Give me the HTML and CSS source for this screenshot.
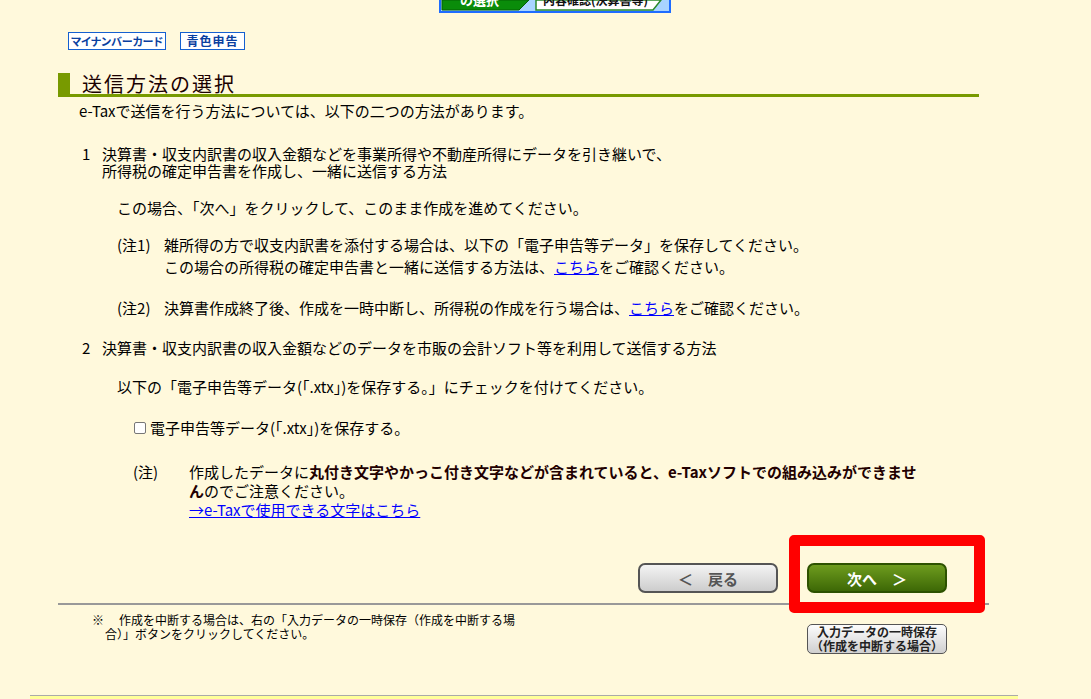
FILE: index.html
```
<!DOCTYPE html>
<html lang="ja">
<head>
    <meta charset="UTF-8">
    <meta name="viewport" content="width=device-width, initial-scale=1.0">
    <title>送信方法の選択</title>
    <link rel="stylesheet" href="styles.css">
</head>
<body>
    <!-- 進行状況 (上部の画像の下端だけが見えている) -->
    <div class="steps">
        <svg width="232" height="13" viewBox="0 0 232 13">
            <rect x="1" y="-2" width="230" height="14" fill="#a8d4ff" stroke="#1e6cff" stroke-width="2"/>
            <polygon points="3,0 90,0 80,10 3,10" fill="#0a8c0a" stroke="#056005" stroke-width="1"/>
            <text x="21" y="5" class="step-on">の選択</text>
            <polygon points="97,0 222,0 214,10 97,10" fill="#fff" stroke="#2a8a2a" stroke-width="1.5"/>
            <text x="104" y="5" class="step-off">内容確認(決算書等)</text>
        </svg>
    </div>

    <div class="tags">
        <span class="tag tag-card">マイナンバーカード</span>
        <span class="tag tag-blue">青色申告</span>
    </div>

    <div class="content">
        <h2 class="title">送信方法の選択</h2>
        <p class="lead">e-Taxで送信を行う方法については、以下の二つの方法があります。</p>

        <div class="item item-1">
            <span class="num">1</span>
            <p>決算書・収支内訳書の収入金額などを事業所得や不動産所得にデータを引き継いで、<br>所得税の確定申告書を作成し、一緒に送信する方法</p>
        </div>
        <p class="sub sub-next">この場合、「次へ」をクリックして、このまま作成を進めてください。</p>
        <div class="note note-1">
            <span>(注1)</span>
            <p>雑所得の方で収支内訳書を添付する場合は、以下の「電子申告等データ」を保存してください。<br>この場合の所得税の確定申告書と一緒に送信する方法は、<a href="#">こちら</a>をご確認ください。</p>
        </div>
        <div class="note note-2">
            <span>(注2)</span>
            <p>決算書作成終了後、作成を一時中断し、所得税の作成を行う場合は、<a href="#">こちら</a>をご確認ください。</p>
        </div>

        <div class="item item-2">
            <span class="num">2</span>
            <p>決算書・収支内訳書の収入金額などのデータを市販の会計ソフト等を利用して送信する方法</p>
        </div>
        <p class="sub sub-check">以下の「電子申告等データ(「.xtx」)を保存する。」にチェックを付けてください。</p>
        <label class="save-check"><input type="checkbox">電子申告等データ(「.xtx」)を保存する。</label>

        <div class="caution">
            <span>(注)</span>
            <p>作成したデータに<strong>丸付き文字やかっこ付き文字などが含まれていると、e-Taxソフトでの組み込みができません</strong>のでご注意ください。<br><a href="#">→e-Taxで使用できる文字はこちら</a></p>
        </div>

        <div class="nav">
            <button class="btn btn-back">＜　戻る</button>
            <div class="next-wrap">
                <button class="btn btn-next">次へ　＞</button>
                <span class="highlight"></span>
            </div>
        </div>
    </div>

    <div class="rule"></div>

    <div class="footer">
        <p class="suspend-note"><span class="mark">※</span>作成を中断する場合は、右の「入力データの一時保存（作成を中断する場合）」ボタンをクリックしてください。</p>
        <button class="btn-save">入力データの一時保存<br>（作成を中断する場合）</button>
    </div>

    <div class="band"></div>
</body>
</html>
```

FILE: styles.css
```
* {
    margin: 0;
    padding: 0;
    box-sizing: border-box;
}

body {
    background-color: #fff9dc;
    color: #000;
    font-family: "Noto Sans CJK JP", "Liberation Sans", sans-serif;
    font-size: 15px;
    line-height: 17px;
}

a {
    color: #0000ff;
    text-decoration: underline;
}

.steps {
    margin-left: 439px;
    height: 13px;
    overflow: hidden;
}

.steps svg {
    display: block;
}

.step-on {
    font-size: 13px;
    font-weight: 700;
    fill: #fff;
}

.step-off {
    font-size: 12px;
    font-weight: 700;
    fill: #111;
}

.tags {
    display: flex;
    gap: 14px;
    margin: 19px 0 0 68px;
}

.tag {
    display: block;
    height: 18px;
    border: 1px solid #1560d0;
    background-color: #fff;
    color: #0a3fa0;
    font-size: 11px;
    font-weight: 700;
    line-height: 16px;
    text-align: center;
}

.tag-card {
    width: 98px;
    font-feature-settings: "palt";
}

.tag-blue {
    width: 65px;
    font-size: 12px;
    letter-spacing: 1px;
}

.content {
    margin-left: 58px;
    width: 921px;
}

.title {
    height: 24px;
    margin-top: 23px;
    padding-left: 12px;
    border-left: 12px solid #789a00;
    border-bottom: 3px solid #789a00;
    color: #1a0000;
    font-size: 20px;
    font-weight: 400;
    line-height: 21px;
    letter-spacing: 2px;
}

.lead {
    margin: 5px 0 0 21px;
}

.item {
    display: flex;
    margin-left: 24px;
}

.item .num {
    width: 20px;
}

.item-1 {
    margin-top: 26px;
}

.item-2 {
    margin-top: 23px;
}

.sub {
    margin-left: 59px;
}

.sub-next {
    margin-top: 20px;
}

.sub-check {
    margin-top: 22px;
}

.note {
    display: grid;
    grid-template-columns: 47px 1fr;
    margin-left: 59px;
}

.note-1 {
    margin-top: 18px;
    line-height: 22px;
}

.note-2 {
    margin-top: 21px;
}

.save-check {
    display: flex;
    align-items: center;
    margin: 24px 0 0 76px;
}

.save-check input {
    appearance: none;
    width: 12px;
    height: 12px;
    margin-right: 4px;
    border: 1px solid #777;
    border-radius: 2px;
    background-color: #fff;
}

.caution {
    display: grid;
    grid-template-columns: 56px 738px;
    margin: 26px 0 0 75px;
    line-height: 19px;
}

.caution strong {
    color: #200;
}

.nav {
    display: flex;
    gap: 29px;
    margin-top: 44px;
    padding-left: 580px;
}

.btn {
    width: 140px;
    height: 30px;
    border-radius: 7px;
    font-family: "Noto Sans CJK JP", sans-serif;
    font-size: 15px;
    font-weight: 700;
}

.btn-back {
    border: 2px solid #555;
    background: linear-gradient(#f4f4f4, #cdcdcd);
    color: #555;
}

.btn-next {
    border: 2px solid #2d5200;
    background: linear-gradient(#6e9c1e, #3d6806);
    color: #fff;
}

.next-wrap {
    position: relative;
}

.highlight {
    position: absolute;
    left: -18px;
    top: -28px;
    width: 196px;
    height: 78px;
    border: 11px solid #ff0000;
    border-radius: 5px;
}

.rule {
    width: 931px;
    margin: 10px 0 0 58px;
    border-top: 2px solid #999;
}

.footer {
    display: flex;
    align-items: flex-start;
    margin-left: 105px;
}

.suspend-note {
    width: 427px;
    margin-top: 8px;
    font-size: 12px;
    line-height: 14px;
    text-indent: -13px;
}

.suspend-note .mark {
    display: inline-block;
    width: 27px;
    text-indent: 0;
}

.btn-save {
    width: 140px;
    height: 30px;
    margin: 19px 0 0 275px;
    border: 1px solid #555;
    border-radius: 5px;
    background: linear-gradient(#fdfdfd, #cfcfcf);
    color: #222;
    font-family: "Noto Sans CJK JP", sans-serif;
    font-size: 12px;
    font-weight: 700;
    line-height: 14px;
}

.band {
    width: 988px;
    height: 20px;
    margin: 41px 0 0 30px;
    border-top: 1px solid #aaa;
    background-color: #ffff99;
}
```
